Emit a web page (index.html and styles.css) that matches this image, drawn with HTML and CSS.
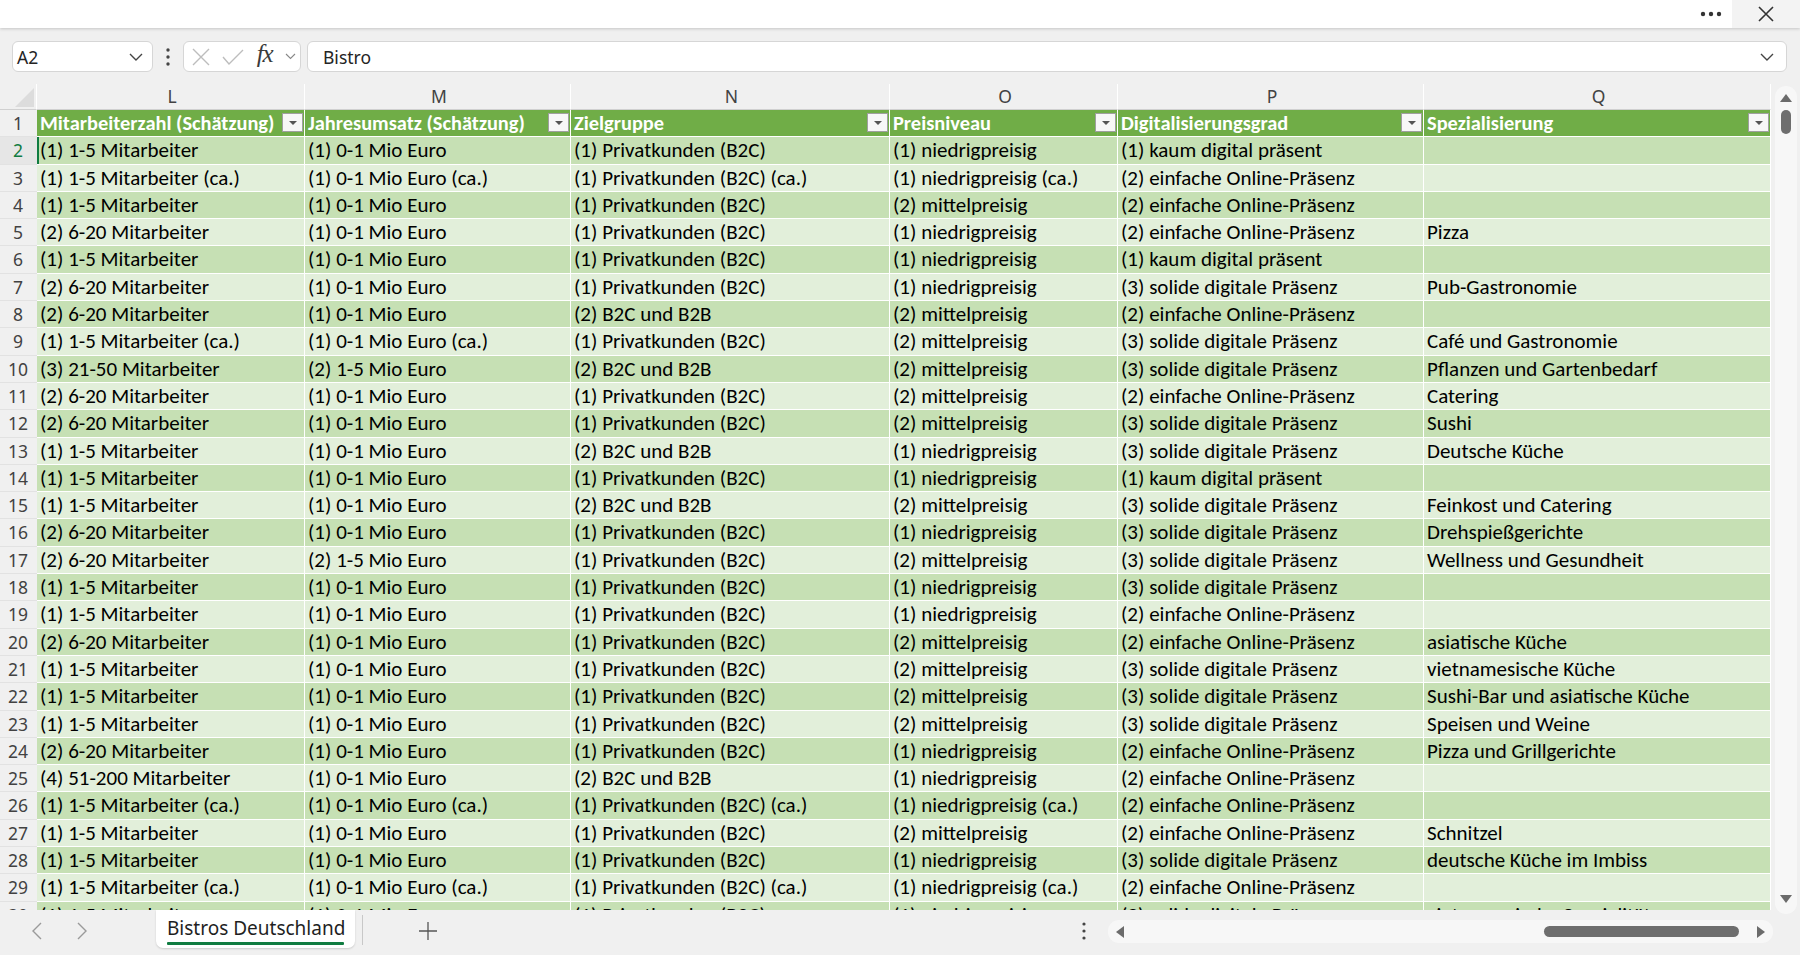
FILE: index.html
```html
<!DOCTYPE html>
<html lang="de">
<head>
  <meta charset="UTF-8" />
  <title>Bistros Deutschland</title>
  <link rel="stylesheet" href="styles.css">
</head>
<body>
  <div class="fenster">
    <div class="titelleiste">
      <div class="mehr">
        <svg width="22" height="6" viewBox="0 0 22 6"><circle cx="3" cy="3" r="2.2"/><circle cx="11" cy="3" r="2.2"/><circle cx="19" cy="3" r="2.2"/></svg>
      </div>
      <div class="schliessen">
        <svg width="16" height="16" viewBox="0 0 16 16"><path d="M1 1L15 15M15 1L1 15"/></svg>
      </div>
    </div>

    <div class="bearbeitungsleiste">
      <div class="namenfeld">
        <span>A2</span>
        <svg class="pfeil" width="14" height="8" viewBox="0 0 14 8"><path d="M1 1l6 6 6-6"/></svg>
      </div>
      <div class="punkte">
        <svg width="4" height="18" viewBox="0 0 4 18"><circle cx="2" cy="2" r="1.7"/><circle cx="2" cy="9" r="1.7"/><circle cx="2" cy="16" r="1.7"/></svg>
      </div>
      <div class="funktionen">
        <svg class="grau" width="18" height="18" viewBox="0 0 18 18"><path d="M1 1L17 17M17 1L1 17"/></svg>
        <svg class="grau" width="22" height="16" viewBox="0 0 22 16"><path d="M1 8l6 7L21 1"/></svg>
        <span class="fx">fx</span>
        <svg class="pfeil klein" width="11" height="7" viewBox="0 0 11 7"><path d="M1 1l4.5 4.5L10 1"/></svg>
      </div>
      <div class="formel">
        <span>Bistro</span>
        <svg class="pfeil" width="14" height="8" viewBox="0 0 14 8"><path d="M1 1l6 6 6-6"/></svg>
      </div>
    </div>

    <div class="arbeitsbereich">
      <div class="tabelle" id="tabelle">
        <div class="zeile spalten">
          <div class="ecke"><span></span></div>
          <div>L</div><div>M</div><div>N</div><div>O</div><div>P</div><div>Q</div>
        </div>
        <div class="zeile kopf">
          <div class="nr">1</div>
          <div>Mitarbeiterzahl (Schätzung)<span class="filter"></span></div>
          <div>Jahresumsatz (Schätzung)<span class="filter"></span></div>
          <div>Zielgruppe<span class="filter"></span></div>
          <div>Preisniveau<span class="filter"></span></div>
          <div>Digitalisierungsgrad<span class="filter"></span></div>
          <div>Spezialisierung<span class="filter"></span></div>
        </div>
      </div>
      <div class="vscroll">
        <div class="spur">
          <span class="dreieck hoch"></span>
          <span class="daumen"></span>
          <span class="dreieck runter"></span>
        </div>
      </div>
    </div>

    <div class="blattleiste">
      <div class="nav">
        <svg width="10" height="18" viewBox="0 0 10 18"><path d="M9 1L1 9l8 8"/></svg>
        <svg width="10" height="18" viewBox="0 0 10 18"><path d="M1 1l8 8-8 8"/></svg>
      </div>
      <div class="blatt">Bistros Deutschland</div>
      <div class="trenner"></div>
      <div class="neu">
        <svg width="18" height="18" viewBox="0 0 18 18"><path d="M9 0v18M0 9h18"/></svg>
      </div>
      <div class="hpunkte">
        <svg width="4" height="18" viewBox="0 0 4 18"><circle cx="2" cy="2" r="1.6"/><circle cx="2" cy="9" r="1.6"/><circle cx="2" cy="16" r="1.6"/></svg>
      </div>
      <div class="hscroll">
        <span class="dreieck links"></span>
        <span class="hdaumen"></span>
        <span class="dreieck rechts"></span>
      </div>
    </div>
  </div>

  <script>
    const daten = [
      ["(1) 1-5 Mitarbeiter", "(1) 0-1 Mio Euro", "(1) Privatkunden (B2C)", "(1) niedrigpreisig", "(1) kaum digital präsent", ""],
      ["(1) 1-5 Mitarbeiter (ca.)", "(1) 0-1 Mio Euro (ca.)", "(1) Privatkunden (B2C) (ca.)", "(1) niedrigpreisig (ca.)", "(2) einfache Online-Präsenz", ""],
      ["(1) 1-5 Mitarbeiter", "(1) 0-1 Mio Euro", "(1) Privatkunden (B2C)", "(2) mittelpreisig", "(2) einfache Online-Präsenz", ""],
      ["(2) 6-20 Mitarbeiter", "(1) 0-1 Mio Euro", "(1) Privatkunden (B2C)", "(1) niedrigpreisig", "(2) einfache Online-Präsenz", "Pizza"],
      ["(1) 1-5 Mitarbeiter", "(1) 0-1 Mio Euro", "(1) Privatkunden (B2C)", "(1) niedrigpreisig", "(1) kaum digital präsent", ""],
      ["(2) 6-20 Mitarbeiter", "(1) 0-1 Mio Euro", "(1) Privatkunden (B2C)", "(1) niedrigpreisig", "(3) solide digitale Präsenz", "Pub-Gastronomie"],
      ["(2) 6-20 Mitarbeiter", "(1) 0-1 Mio Euro", "(2) B2C und B2B", "(2) mittelpreisig", "(2) einfache Online-Präsenz", ""],
      ["(1) 1-5 Mitarbeiter (ca.)", "(1) 0-1 Mio Euro (ca.)", "(1) Privatkunden (B2C)", "(2) mittelpreisig", "(3) solide digitale Präsenz", "Café und Gastronomie"],
      ["(3) 21-50 Mitarbeiter", "(2) 1-5 Mio Euro", "(2) B2C und B2B", "(2) mittelpreisig", "(3) solide digitale Präsenz", "Pflanzen und Gartenbedarf"],
      ["(2) 6-20 Mitarbeiter", "(1) 0-1 Mio Euro", "(1) Privatkunden (B2C)", "(2) mittelpreisig", "(2) einfache Online-Präsenz", "Catering"],
      ["(2) 6-20 Mitarbeiter", "(1) 0-1 Mio Euro", "(1) Privatkunden (B2C)", "(2) mittelpreisig", "(3) solide digitale Präsenz", "Sushi"],
      ["(1) 1-5 Mitarbeiter", "(1) 0-1 Mio Euro", "(2) B2C und B2B", "(1) niedrigpreisig", "(3) solide digitale Präsenz", "Deutsche Küche"],
      ["(1) 1-5 Mitarbeiter", "(1) 0-1 Mio Euro", "(1) Privatkunden (B2C)", "(1) niedrigpreisig", "(1) kaum digital präsent", ""],
      ["(1) 1-5 Mitarbeiter", "(1) 0-1 Mio Euro", "(2) B2C und B2B", "(2) mittelpreisig", "(3) solide digitale Präsenz", "Feinkost und Catering"],
      ["(2) 6-20 Mitarbeiter", "(1) 0-1 Mio Euro", "(1) Privatkunden (B2C)", "(1) niedrigpreisig", "(3) solide digitale Präsenz", "Drehspießgerichte"],
      ["(2) 6-20 Mitarbeiter", "(2) 1-5 Mio Euro", "(1) Privatkunden (B2C)", "(2) mittelpreisig", "(3) solide digitale Präsenz", "Wellness und Gesundheit"],
      ["(1) 1-5 Mitarbeiter", "(1) 0-1 Mio Euro", "(1) Privatkunden (B2C)", "(1) niedrigpreisig", "(3) solide digitale Präsenz", ""],
      ["(1) 1-5 Mitarbeiter", "(1) 0-1 Mio Euro", "(1) Privatkunden (B2C)", "(1) niedrigpreisig", "(2) einfache Online-Präsenz", ""],
      ["(2) 6-20 Mitarbeiter", "(1) 0-1 Mio Euro", "(1) Privatkunden (B2C)", "(2) mittelpreisig", "(2) einfache Online-Präsenz", "asiatische Küche"],
      ["(1) 1-5 Mitarbeiter", "(1) 0-1 Mio Euro", "(1) Privatkunden (B2C)", "(2) mittelpreisig", "(3) solide digitale Präsenz", "vietnamesische Küche"],
      ["(1) 1-5 Mitarbeiter", "(1) 0-1 Mio Euro", "(1) Privatkunden (B2C)", "(2) mittelpreisig", "(3) solide digitale Präsenz", "Sushi-Bar und asiatische Küche"],
      ["(1) 1-5 Mitarbeiter", "(1) 0-1 Mio Euro", "(1) Privatkunden (B2C)", "(2) mittelpreisig", "(3) solide digitale Präsenz", "Speisen und Weine"],
      ["(2) 6-20 Mitarbeiter", "(1) 0-1 Mio Euro", "(1) Privatkunden (B2C)", "(1) niedrigpreisig", "(2) einfache Online-Präsenz", "Pizza und Grillgerichte"],
      ["(4) 51-200 Mitarbeiter", "(1) 0-1 Mio Euro", "(2) B2C und B2B", "(1) niedrigpreisig", "(2) einfache Online-Präsenz", ""],
      ["(1) 1-5 Mitarbeiter (ca.)", "(1) 0-1 Mio Euro (ca.)", "(1) Privatkunden (B2C) (ca.)", "(1) niedrigpreisig (ca.)", "(2) einfache Online-Präsenz", ""],
      ["(1) 1-5 Mitarbeiter", "(1) 0-1 Mio Euro", "(1) Privatkunden (B2C)", "(2) mittelpreisig", "(2) einfache Online-Präsenz", "Schnitzel"],
      ["(1) 1-5 Mitarbeiter", "(1) 0-1 Mio Euro", "(1) Privatkunden (B2C)", "(1) niedrigpreisig", "(3) solide digitale Präsenz", "deutsche Küche im Imbiss"],
      ["(1) 1-5 Mitarbeiter (ca.)", "(1) 0-1 Mio Euro (ca.)", "(1) Privatkunden (B2C) (ca.)", "(1) niedrigpreisig (ca.)", "(2) einfache Online-Präsenz", ""],
      ["(1) 1-5 Mitarbeiter", "(1) 0-1 Mio Euro", "(1) Privatkunden (B2C)", "(1) niedrigpreisig", "(3) solide digitale Präsenz", "vietnamesische Spezialitäten"]
    ];

    const tabelle = document.getElementById("tabelle");

    daten.forEach((werte, i) => {
      const nr = i + 2;
      const zeile = document.createElement("div");
      zeile.className = "zeile " + (nr % 2 === 0 ? "dunkel" : "hell");
      if (nr === 2) zeile.classList.add("aktiv");

      const kopf = document.createElement("div");
      kopf.className = "nr";
      kopf.innerText = nr;
      zeile.appendChild(kopf);

      werte.forEach(wert => {
        const zelle = document.createElement("div");
        zelle.innerText = wert;
        zeile.appendChild(zelle);
      });

      tabelle.appendChild(zeile);
    });
  </script>
</body>
</html>
```

FILE: styles.css
```css
* {
  box-sizing: border-box;
}

body {
  margin: 0;
  background-color: #f0f0f0;
  font-family: "Noto Sans", "Open Sans", sans-serif;
  color: #242424;
  overflow: hidden;
}

.fenster {
  width: 1800px;
  height: 955px;
  display: flex;
  flex-direction: column;
}

/* obere Leiste */
.titelleiste {
  height: 28px;
  background-color: #fff;
  display: flex;
  justify-content: flex-end;
  box-shadow: 0 1px 3px #0000002e;
  position: relative;
  z-index: 1;
}

.mehr {
  width: 42px;
  display: flex;
  align-items: center;
  justify-content: center;
  fill: #333;
}

.schliessen {
  width: 68px;
  background-color: #f3f3f3;
  display: flex;
  align-items: center;
  justify-content: center;
  stroke: #333;
  stroke-width: 1.6;
}

/* Namenfeld und Bearbeitungszeile */
.bearbeitungsleiste {
  height: 56px;
  padding: 13px 13px 12px 12px;
  display: flex;
}

.namenfeld,
.funktionen,
.formel {
  height: 31px;
  background-color: #fff;
  border: 1px solid #d6d6d6;
  border-radius: 6px;
  display: flex;
  align-items: center;
}

.namenfeld {
  width: 141px;
  padding: 0 9px 0 4px;
  justify-content: space-between;
  font-size: 17.5px;
}

.pfeil {
  fill: none;
  stroke: #444;
  stroke-width: 1.4;
}

.pfeil.klein {
  stroke: #888;
  stroke-width: 1.1;
}

.punkte {
  width: 30px;
  display: flex;
  align-items: center;
  justify-content: center;
  fill: #444;
}

.funktionen {
  width: 118px;
  padding: 0 4px 0 8px;
  justify-content: space-between;
}

.grau {
  fill: none;
  stroke: #bdbdbd;
  stroke-width: 1.4;
}

.fx {
  font-family: "Liberation Serif", serif;
  font-style: italic;
  font-size: 25px;
  color: #3a3a3a;
  margin-top: -5px;
  letter-spacing: -1px;
}

.formel {
  flex: 1;
  margin-left: 6px;
  padding: 0 12px 0 15px;
  justify-content: space-between;
  font-size: 17.5px;
}

/* Tabellenbereich */
.arbeitsbereich {
  height: 826px;
  display: flex;
}

.tabelle {
  width: 1771px;
  height: 826px;
  overflow: hidden;
}

.zeile {
  display: grid;
  grid-template-columns: 37px 268px 266px 319px 228px 306px 347px;
  height: 27.3px;
  font-family: "Carlito", "Lato", sans-serif;
  font-size: 21px;
  color: #000;
}

.zeile > div {
  border-right: 1px solid #fff;
  border-bottom: 1px solid #fff;
  padding-left: 3px;
  white-space: nowrap;
  overflow: hidden;
  line-height: 26px;
}

.zeile > .nr {
  background-color: #f0f0f0;
  border-right: none;
  border-bottom: 1px solid #e2e2e2;
  padding: 0 1px 0 0;
  text-align: center;
  font-family: "Noto Sans", sans-serif;
  font-size: 17.5px;
  color: #424242;
}

.zeile.dunkel > div {
  background-color: #c6e0b4;
}

.zeile.hell > div {
  background-color: #e2efda;
}

.zeile.dunkel > .nr,
.zeile.hell > .nr {
  background-color: #f0f0f0;
}

.zeile.aktiv > .nr {
  color: #107c41;
  background-color: #e6e6e6;
}

.zeile.aktiv > div:nth-child(2) {
  box-shadow: inset 2px 0 0 #107c41;
}

/* Spaltenbuchstaben */
.spalten {
  height: 26px;
  font-family: "Noto Sans", sans-serif;
  font-size: 17.5px;
  color: #424242;
}

.spalten > div {
  background-color: #f0f0f0;
  border-right: 1px solid #fff;
  border-bottom: 1px solid #d0d0d0;
  text-align: center;
  line-height: 25px;
}

.ecke {
  position: relative;
}

.ecke span {
  position: absolute;
  left: 15px;
  bottom: 2px;
  width: 0;
  height: 0;
  border-left: 19px solid transparent;
  border-bottom: 19px solid #dcdcdc;
}

/* Überschriftenzeile der Tabelle */
.kopf > div {
  background-color: #70ad47;
  color: #fff;
  font-weight: bold;
  font-size: 20.4px;
  position: relative;
}

.kopf > .nr {
  font-weight: normal;
}

.filter {
  position: absolute;
  right: 1px;
  top: 3px;
  width: 21px;
  height: 19px;
  background-color: #f7f7f7;
  border: 1px solid #9f9f9f;
}

.filter::after {
  content: "";
  position: absolute;
  left: 6px;
  top: 7px;
  border-left: 4px solid transparent;
  border-right: 4px solid transparent;
  border-top: 4px solid #555;
}

/* Bildlaufleisten */
.vscroll {
  width: 29px;
  padding: 2px 3px 0 4px;
}

.spur {
  height: 828px;
  background-color: #f7f7f7;
  border-radius: 11px;
  display: flex;
  flex-direction: column;
  align-items: center;
  padding-top: 8px;
}

.dreieck {
  width: 0;
  height: 0;
}

.hoch {
  border-left: 6px solid transparent;
  border-right: 6px solid transparent;
  border-bottom: 8px solid #6b6b6b;
}

.runter {
  margin-top: auto;
  margin-bottom: 11px;
  border-left: 6px solid transparent;
  border-right: 6px solid transparent;
  border-top: 8px solid #6b6b6b;
}

.daumen {
  margin-top: 8px;
  width: 10px;
  height: 24px;
  border-radius: 5px;
  background-color: #6e6e6e;
}

/* Blattregister */
.blattleiste {
  height: 45px;
  display: flex;
  align-items: flex-start;
}

.nav {
  width: 156px;
  height: 42px;
  display: flex;
  align-items: center;
  gap: 35px;
  padding-left: 32px;
  fill: none;
  stroke: #9a9a9a;
  stroke-width: 1.4;
}

.blatt {
  width: 199px;
  height: 38px;
  background-color: #fff;
  border-radius: 0 0 7px 7px;
  box-shadow: 0 1px 2px #00000026;
  font-size: 19px;
  line-height: 24px;
  color: #1f1f1f;
  padding: 6px 0 0 11px;
  position: relative;
}

.blatt::after {
  content: "";
  position: absolute;
  left: 11px;
  right: 11px;
  top: 32px;
  height: 3px;
  border-radius: 1px;
  background-color: #107c41;
}

.trenner {
  width: 1px;
  height: 30px;
  margin: 5px 0 0 7px;
  background-color: #c8c8c8;
}

.neu {
  width: 56px;
  height: 42px;
  margin-left: 56px;
  display: flex;
  align-items: center;
  stroke: #555;
  stroke-width: 1.3;
}

.hpunkte {
  margin-left: 607px;
  height: 42px;
  display: flex;
  align-items: center;
  fill: #444;
}

.hscroll {
  margin: 10px 0 0 22px;
  width: 665px;
  height: 23px;
  background-color: #f7f7f7;
  border-radius: 11px;
  display: flex;
  align-items: center;
  padding: 0 8px 0 8px;
}

.links {
  border-top: 6px solid transparent;
  border-bottom: 6px solid transparent;
  border-right: 8px solid #6b6b6b;
}

.hdaumen {
  margin-left: auto;
  width: 195px;
  height: 11px;
  border-radius: 6px;
  background-color: #6e6e6e;
}

.rechts {
  margin-left: 18px;
  border-top: 6px solid transparent;
  border-bottom: 6px solid transparent;
  border-left: 8px solid #6b6b6b;
}
```
